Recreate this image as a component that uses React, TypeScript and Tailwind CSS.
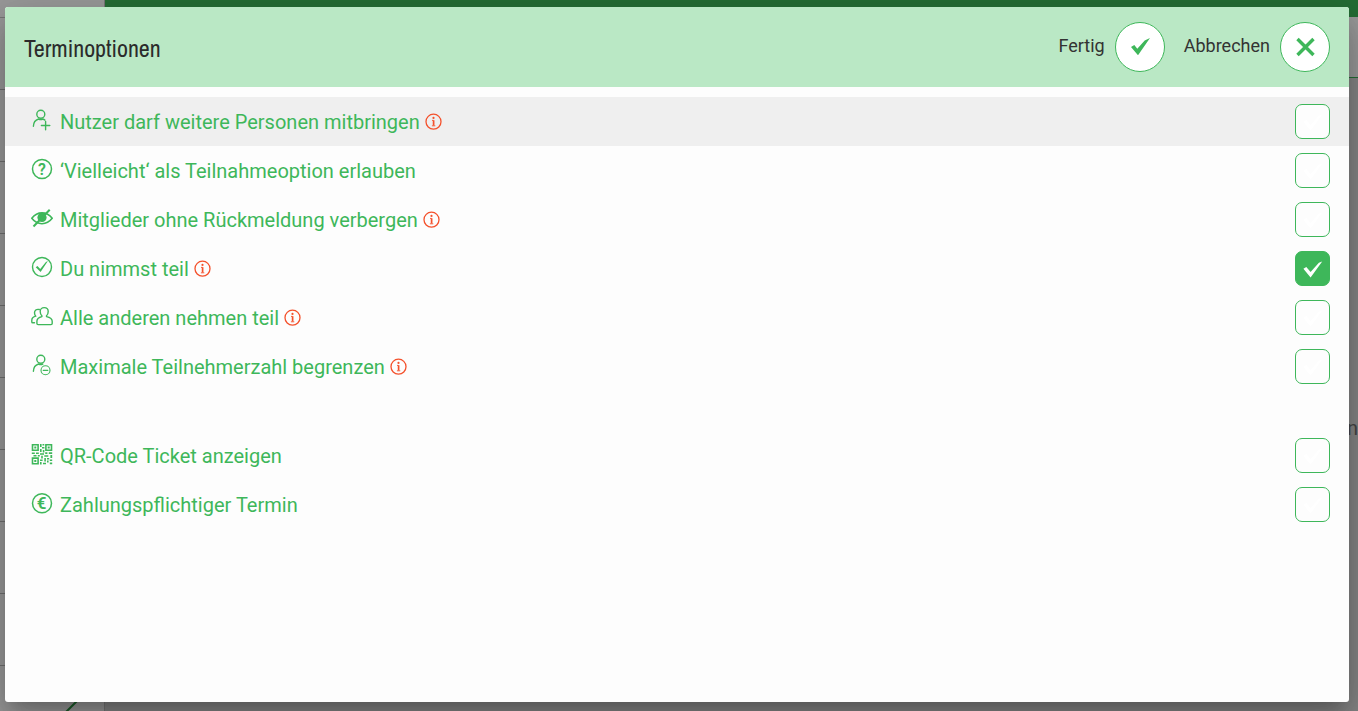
import { useState, type ReactNode } from "react";
import clsx from "clsx";

const icons: Record<string, ReactNode> = {
  userPlus: (
    <g fill="none" stroke="currentColor" strokeWidth="1.4" strokeLinecap="round">
      <circle cx="9.8" cy="5.3" r="4" />
      <path d="M2.4 17.3c.1-3.9 2.3-6.4 5.2-7.3 1.4.6 2.8.6 4.2 0 .9.3 1.6.7 2.1 1.1" />
      <path d="M14.6 12.4v8.4M10.4 16.5h8.4" />
    </g>
  ),
  question: (
    <>
      <circle cx="11" cy="11" r="9.5" fill="none" stroke="currentColor" strokeWidth="1.5" />
      <text x="11" y="16.5" fontSize="16" fontWeight="600" textAnchor="middle" fill="currentColor">?</text>
    </>
  ),
  hidden: (
    <>
      <path d="M.8 11.3C3.6 7.7 7 5.9 11 5.9s7.4 1.8 10.2 5.4c-2.8 3.6-6.2 5.4-10.2 5.4S3.600 14.9.8 11.300z" fill="none" stroke="currentColor" strokeWidth="1.6" />
      <circle cx="11" cy="10.4" r="4.6" fill="currentColor" />
      <path d="M2.5 19.500L18.700 2.700" stroke="currentColor" strokeWidth="2" />
    </>
  ),
  attending: (
    <>
      <circle cx="11" cy="11" r="9.5" fill="none" stroke="currentColor" strokeWidth="1.4" />
      <path d="M4.7 11.200l1.800-1.100 2.700 2.800 5.700-7 2-.9-7.300 11z" fill="currentColor" />
    </>
  ),
  group: (
    <g fill="none" stroke="currentColor" strokeWidth="1.4" strokeLinejoin="round" strokeLinecap="round">
      <path d="M10.900 10.800C9.400 9.600 9.200 8 9.200 6.500c0-2.300 1.700-3.900 4-3.900s4 1.600 4 3.900c0 1.500-.2 3.100-1.700 4.300v.8c3.400.7 5.700 2.200 5.700 4.700v2.200c0 .7-.5 1.100-1.200 1.100H7.100c-.7 0-1.200-.4-1.200-1.100v-2.200c0-2.500 1.900-4 5-4.700z" />
      <path d="M8.300 4.500C5.300 3.800 3.500 5.500 3.500 7.800c0 1.400.3 2.500 1.300 3.400-2.500.7-4 1.800-4 4v1.700c0 .6.3.9.9.9h1.800" />
    </g>
  ),
  userMinus: (
    <g fill="none" stroke="currentColor" strokeWidth="1.4" strokeLinecap="round">
      <circle cx="9.8" cy="5.3" r="4" />
      <path d="M2.4 17.3c.1-3.9 2.3-6.4 5.2-7.3 1.400.6 2.800.6 4.200 0" />
      <circle cx="14.5" cy="16.3" r="4.5" strokeWidth="1.1" />
      <path d="M12.200 16.300h4.600" strokeWidth="1.2" />
    </g>
  ),
  qr: (
    <>
      <path
        d="M1.500 1.700h5.600v5.600H1.500zM14.900 1.700h5.600v5.600h-5.600zM1.500 15.100h5.600v5.600H1.500z"
        fill="none"
        stroke="currentColor"
        strokeWidth="1.6"
      />
      <path
        d="M3.300 3.500h2v2h-2zM16.700 3.500h2v2h-2zM3.300 16.900h2v2h-2zM9 1h1.600v3H9zM11.500 1h1.800v1.600h-1.800zM11 4h2.400v1.600H11zM9 6h1.600v3H9zM11.800 7h1.600v2.400h-1.600zM.8 9.500h3v1.600h-3zM5 9.500h2.800v1.600H5zM2.500 12h3v1.600h-3zM6.800 12h2v1.600h-2zM9 10.200h4v1.600H9zM14.200 9.300h2.200v1.600h-2.200zM17.800 9.300h3.400v1.600h-3.400zM10.200 12.800h1.600v2.800h-1.600zM13.300 12.200h4v1.600h-4zM19.400 12h1.800v3h-1.800zM9 16.500h2.600v1.600H9zM9 19h1.600v2.400H9zM12 19.700h3v1.600h-3zM13.300 15h1.600v3.500h-1.600zM16 15h2.200v1.600H16zM16 17.600h1.600v2H16zM18.800 16.500h2.400v1.600h-2.400zM18.800 19.500h2.400v1.800h-2.400z"
        fill="currentColor"
      />
    </>
  ),
  euro: (
    <>
      <circle cx="11" cy="11.200" r="9.5" fill="none" stroke="currentColor" strokeWidth="1.5" />
      <text x="10.5" y="17.2" fontSize="17" fontWeight="600" textAnchor="middle" fill="currentColor">€</text>
    </>
  ),
};

type Option = { id: string; label: string; icon: string; info?: boolean };

const groups: Option[][] = [
  [
    { id: "guests", label: "Nutzer darf weitere Personen mitbringen", icon: "userPlus", info: true },
    { id: "maybe", label: "‘Vielleicht‘ als Teilnahmeoption erlauben", icon: "question" },
    { id: "hide", label: "Mitglieder ohne Rückmeldung verbergen", icon: "hidden", info: true },
    { id: "self", label: "Du nimmst teil", icon: "attending", info: true },
    { id: "others", label: "Alle anderen nehmen teil", icon: "group", info: true },
    { id: "limit", label: "Maximale Teilnehmerzahl begrenzen", icon: "userMinus", info: true },
  ],
  [
    { id: "ticket", label: "QR-Code Ticket anzeigen", icon: "qr" },
    { id: "paid", label: "Zahlungspflichtiger Termin", icon: "euro" },
  ],
];

function InfoButton() {
  return (
    <button type="button" aria-label="Info" className="ml-[5px] text-[#f4512c]">
      <svg viewBox="0 0 17 17" className="size-[17px]">
        <circle cx="8.5" cy="8.7" r="7.5" fill="none" stroke="currentColor" strokeWidth="1.3" />
        <circle cx="8.5" cy="4.900" r="1.100" fill="currentColor" />
        <path d="M8.600 7.200v5.300" fill="none" stroke="currentColor" strokeWidth="1.7" />
        <path d="M7 7.400h1.600M6.900 12.800h3.400" fill="none" stroke="currentColor" strokeWidth=".9" />
      </svg>
    </button>
  );
}

function OptionRow({ option, active, checked, onToggle }: { option: Option; active: boolean; checked: boolean; onToggle: () => void }) {
  return (
    <li className={clsx("flex h-[49px] items-center pl-[26px] pr-[19px]", active && "bg-[#efefef]")}>
      <label htmlFor={option.id} className="flex items-center gap-[7px] text-xl">
        <svg viewBox="0 0 22 22" className="mb-[3px] size-[22px] shrink-0">
          {icons[option.icon]}
        </svg>
        {option.label}
      </label>
      {option.info && <InfoButton />}
      <div className="relative ml-auto size-[35px] shrink-0">
        <input
          id={option.id}
          type="checkbox"
          checked={checked}
          onChange={onToggle}
          className="block size-full appearance-none rounded-[7px] border border-[#3eb75a] bg-[#fdfdfd] checked:bg-[#3eb75a]"
        />
        <svg viewBox="0 0 35 35" className="pointer-events-none absolute inset-0 fill-white">
          <path d="M8.400 17.800l2.900-1.800 4.300 5 8.300-9.300 3.300-1.300-11.600 16z" />
        </svg>
      </div>
    </li>
  );
}

function HeaderButton({ label, children }: { label: string; children: ReactNode }) {
  return (
    <button type="button" className="flex items-center gap-2.5 text-lg text-[#333]">
      <span className="pb-0.5">{label}</span>
      <span className="flex size-[50px] items-center justify-center rounded-full border border-[#3eb75a] bg-white text-[#3eb75a]">
        <svg viewBox="0 0 22 22" className="size-[22px]">
          {children}
        </svg>
      </span>
    </button>
  );
}

// Dimmed page that stays visible around the edges of the dialog
function Backdrop() {
  return (
    <div aria-hidden="true" className="absolute inset-0 flex bg-[#858585]">
      <div className="flex w-[105px] flex-col overflow-hidden border-r border-[#777] bg-[#999]">
        <div className="h-[18px] shrink-0 border-b border-[#777]" />
        {Array.from({ length: 9 }, (_, i) => (
          <div key={i} className="h-18 shrink-0 border-b border-[#6f6f6f]" />
        ))}
        <svg viewBox="0 0 24 24" className="ml-[60px] mt-[34px] size-6 shrink-0" fill="none" stroke="#1b5e29" strokeWidth="2">
          <path d="M6 12L18 0" />
        </svg>
      </div>
      <div className="flex flex-1 flex-col">
        <div className="h-[17px] bg-[#246d34]" />
        <div className="h-[61px] border-b border-[#246d34] bg-[#999]" />
        <div className="mt-[336px] text-right text-xl text-[#444]">n</div>
      </div>
    </div>
  );
}

export default function App() {
  const [selected, setSelected] = useState<string[]>(["self"]);

  const toggle = (id: string) =>
    setSelected((prev) => (prev.includes(id) ? prev.filter((x) => x !== id) : [...prev, id]));

  return (
    <div className="relative flex min-h-screen overflow-hidden pb-[9px] pl-[5px] pr-[9px] pt-[7px] font-[Roboto,sans-serif]">
      <Backdrop />
      <div
        role="dialog"
        aria-labelledby="dialog-title"
        className="relative flex-1 overflow-hidden rounded-[3px] bg-[#fdfdfd] shadow-[0_11px_15px_-7px_rgba(0,0,0,0.2),0_24px_38px_3px_rgba(0,0,0,0.14),0_9px_46px_8px_rgba(0,0,0,0.12)]"
      >
        <header className="flex h-20 items-center justify-between bg-[#bae8c5] px-[19px]">
          <h1 id="dialog-title" className="pt-0.5 font-['Liberation_Sans_Narrow','Archivo_Narrow',sans-serif] text-2xl text-[#2b2b2b]">
            Terminoptionen
          </h1>
          <div className="flex gap-[19px]">
            <HeaderButton label="Fertig">
              <path d="M2 11l3.300-2 3 3.800 7.400-8.400L21 2 9 19.200z" fill="currentColor" />
            </HeaderButton>
            <HeaderButton label="Abbrechen">
              <path d="M3.500 3L19.500 19M19.500 3L3.500 19" stroke="currentColor" strokeWidth="3.400" />
            </HeaderButton>
          </div>
        </header>
        <div className="flex flex-col gap-10 py-2.5 text-[#3eb75a]">
          {groups.map((group, i) => (
            <ul key={i}>
              {group.map((option) => (
                <OptionRow
                  key={option.id}
                  option={option}
                  active={option.id === "guests"}
                  checked={selected.includes(option.id)}
                  onToggle={() => toggle(option.id)}
                />
              ))}
            </ul>
          ))}
        </div>
      </div>
    </div>
  );
}
